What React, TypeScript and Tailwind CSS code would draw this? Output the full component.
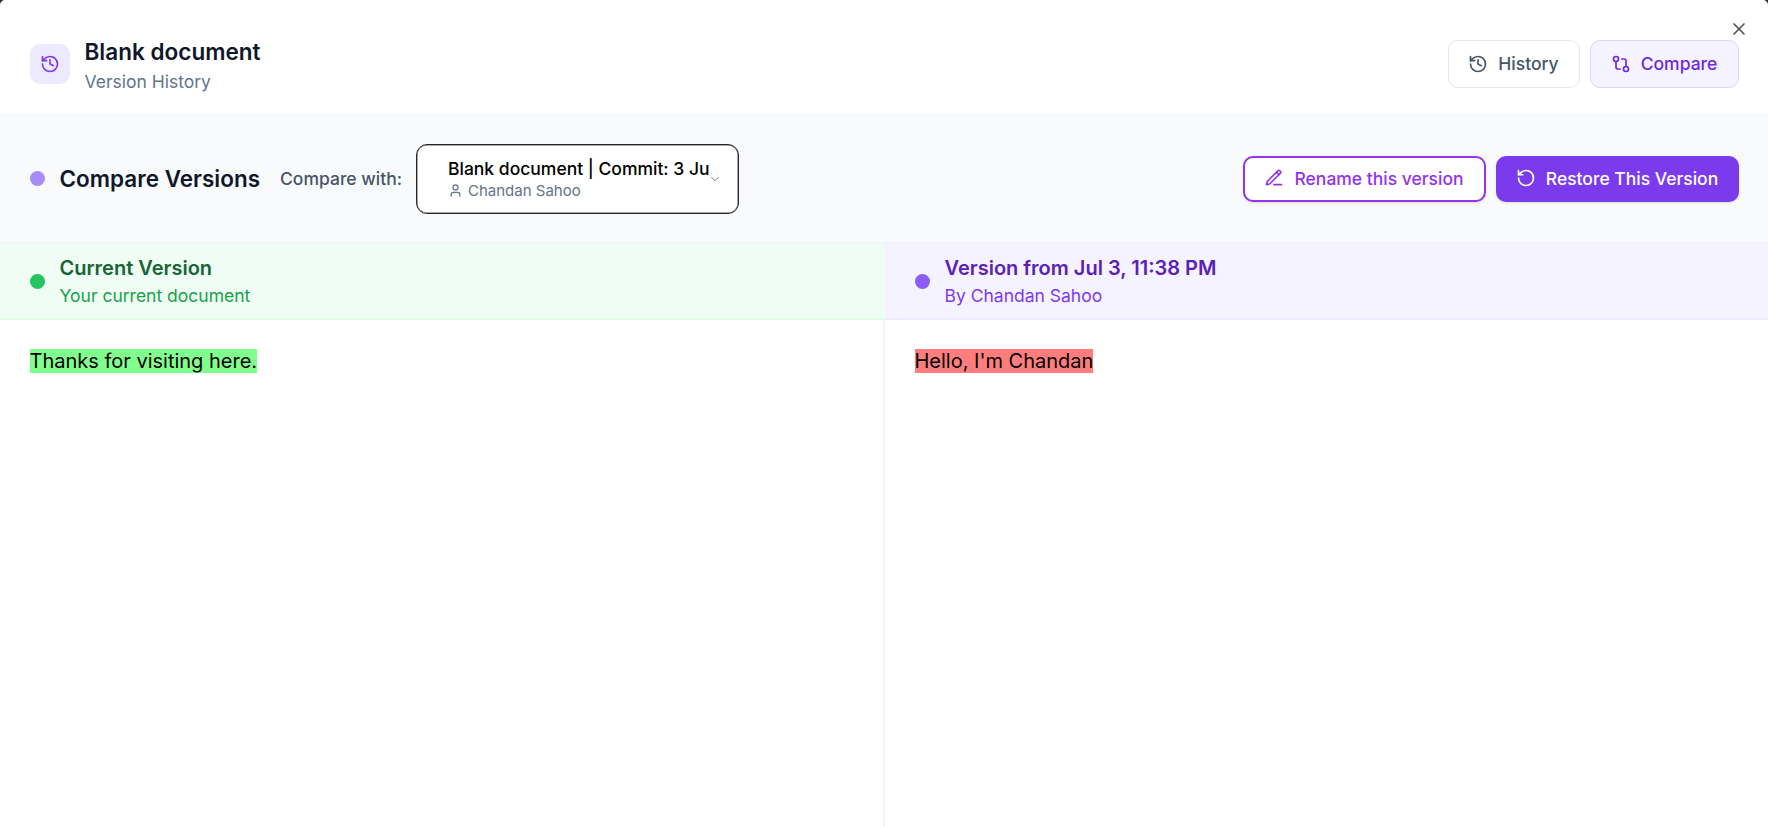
import { GitCompare, History, RotateCcw, User, X, ChevronDown } from "lucide-react";

function PencilIcon() {
  return (
    <svg
      className="-mt-px size-5"
      viewBox="0 0 24 24"
      fill="none"
      stroke="currentColor"
      strokeWidth="2"
      strokeLinecap="round"
      strokeLinejoin="round"
    >
      <path d="M12 20h9" />
      <path d="M16.376 3.622a1 1 0 0 1 3.002 3.002L7.368 18.635a2 2 0 0 1-.855.506l-2.872.838a.5.5 0 0 1-.62-.62l.838-2.872a2 2 0 0 1 .506-.854z" />
      <path d="m15 5 3 3" />
    </svg>
  );
}

function Header() {
  return (
    <header className="relative flex h-[115px] shrink-0 items-center justify-between border-b border-[#f1f5f9] px-[29.5px] pt-[14px]">
      <div className="flex items-center gap-[15px]">
        <div className="flex size-10 items-center justify-center rounded-[10px] bg-[#ede9fe]">
          <History className="size-5 text-[#7c3aed]" />
        </div>
        <div className="pt-[5px]">
          <h1 className="text-[22.5px] leading-[30px] font-semibold tracking-[0.02px] text-[#0f172a]">Blank document</h1>
          <p className="text-[17.5px] leading-[30px] text-[#64748b]">Version History</p>
        </div>
      </div>
      <div className="flex gap-[10px]">
        <button className="flex h-[47.3px] w-[132px] items-center justify-center gap-[10px] rounded-[10px] border border-[#e2e8f0] text-[17.5px] font-medium text-[#475569]">
          <History className="size-5" />
          History
        </button>
        <button className="flex h-[47.3px] w-[149px] items-center justify-center gap-[10px] rounded-[10px] border border-[#ddd6fe] bg-[#f5f3ff] text-[17.5px] font-medium text-[#6d28d9]">
          <GitCompare className="size-5" />
          Compare
        </button>
      </div>
      <button aria-label="Close" className="absolute top-[19.3px] right-[19.5px] text-neutral-600">
        <X className="size-5" />
      </button>
    </header>
  );
}

function Toolbar() {
  return (
    <section className="flex h-[128px] shrink-0 items-center justify-between border-b border-[#f1f5f9] bg-[#f8fafc] px-[29.5px]">
      <div className="flex items-center">
        <span className="size-[15px] rounded-full bg-[#a78bfa]" />
        <h2 className="ml-[15px] text-[22.5px] font-semibold text-[#0f172a]">Compare Versions</h2>
        <span className="ml-5 pt-px text-[17.5px] font-medium text-[#475569]">Compare with:</span>
        <button className="ml-[14px] flex h-[70px] w-[323px] items-center rounded-[11px] border border-neutral-800 bg-white pl-[31px] text-left shadow-[inset_0_0_0_0.5px_#525252]">
          <span className="block w-[260px]">
            <span className="block w-[262px] overflow-hidden text-[17.5px] leading-[24px] font-medium whitespace-nowrap text-black">Blank document | Commit: 3 Ju</span>
            <span className="flex items-center gap-[5px] text-[15px] leading-5 text-[#64748b]">
              <User className="size-[15px]" />
              Chandan Sahoo
            </span>
          </span>
          <ChevronDown className="size-[14px] text-neutral-500" strokeWidth={1.5} />
        </button>
      </div>
      <div className="flex gap-[10px]">
        <button className="flex h-[46px] w-[243px] items-center justify-center gap-[10px] rounded-[10px] border-2 border-[#9333ea] bg-white text-[17.5px] font-medium text-[#9333ea] shadow-sm">
          <PencilIcon />
          <span className="pt-px">Rename this version</span>
        </button>
        <button className="flex h-[46px] w-[243px] items-center justify-center gap-[10px] rounded-[10px] bg-[#7c3aed] text-[17.5px] font-medium text-white shadow-sm">
          <RotateCcw className="-mt-px size-5" />
          <span className="pt-px">Restore This Version</span>
        </button>
      </div>
    </section>
  );
}

export default function App() {
  return (
    <div className="h-[827px] w-full overflow-hidden bg-neutral-800 font-['Inter',sans-serif]">
      <main className="flex h-full flex-col overflow-hidden rounded-t-[5px] bg-white">
        <Header />
        <Toolbar />
        <div className="flex min-h-0 flex-1">
          <section className="flex w-[884.5px] flex-col">
            <div className="flex h-[77px] items-center gap-[15px] border-b-2 border-[#dcfce7] bg-[#f0fdf4] px-[29.5px]">
              <span className="mt-px size-[15px] rounded-full bg-[#22c55e]" />
              <div className="pt-[2px]">
                <h3 className="text-[20px] leading-7 font-semibold text-[#166534]">Current Version</h3>
                <p className="text-[17.5px] leading-7 text-[#16a34a]">Your current document</p>
              </div>
            </div>
            <div className="flex-1 border-r-2 border-[#f1f5f9] px-[29.5px] pt-[26px] text-[20px] leading-[30px] text-black">
              <span className="bg-[#80ff8c]">Thanks for visiting here.</span>
            </div>
          </section>
          <section className="flex flex-1 flex-col">
            <div className="flex h-[77px] items-center gap-[15px] border-b-2 border-[#ede9fe] bg-[#f5f3ff] px-[30px]">
              <span className="mt-px size-[15px] rounded-full bg-[#8b5cf6]" />
              <div className="pt-[2px]">
                <h3 className="text-[20px] leading-7 font-semibold text-[#5b21b6]">Version from Jul 3, 11:38 PM</h3>
                <p className="text-[17.5px] leading-7 text-[#7c3aed]">By Chandan Sahoo</p>
              </div>
            </div>
            <div className="flex-1 px-[30px] pt-[26px] text-[20px] leading-[30px] text-black">
              <span className="bg-[#ff7d7d]">Hello, I'm Chandan</span>
            </div>
          </section>
        </div>
      </main>
    </div>
  );
}
